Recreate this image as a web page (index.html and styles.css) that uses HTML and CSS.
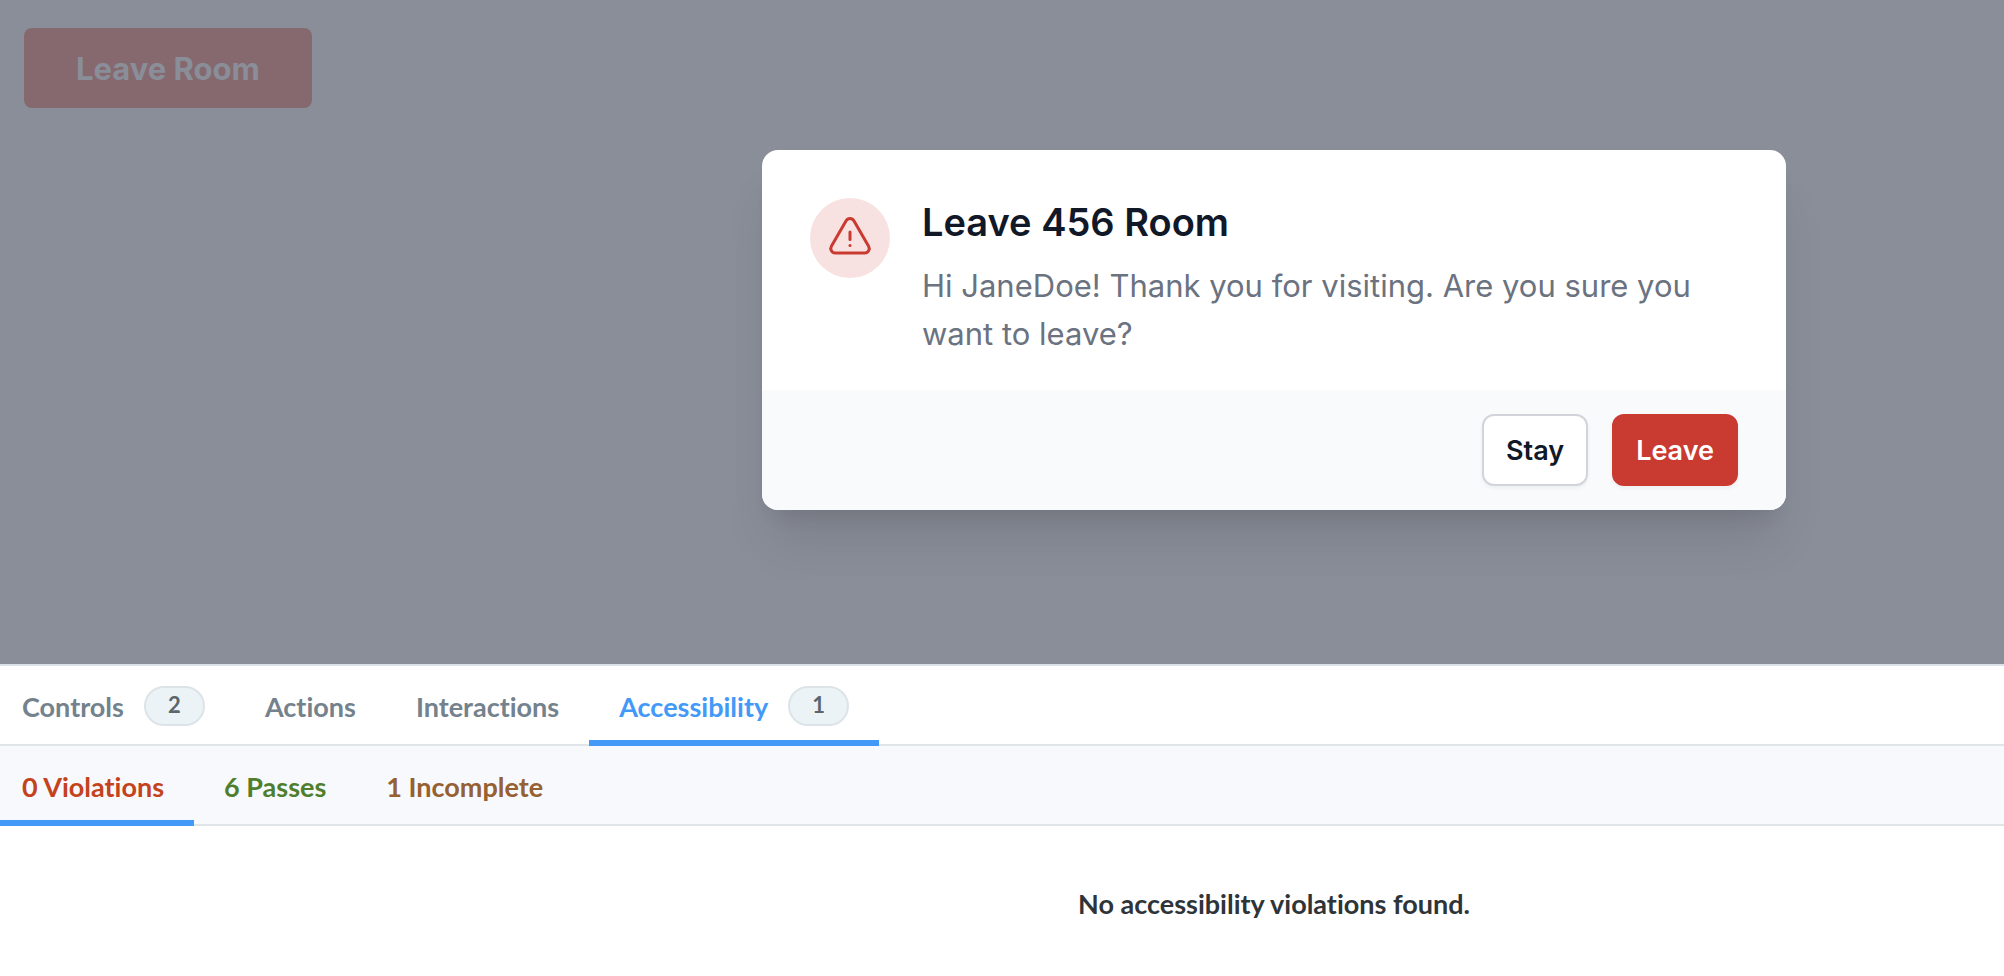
FILE: index.html
```html
<!DOCTYPE html>
<html lang="en">
<head>
<meta charset="utf-8">
<title>Leave Room</title>
<link rel="stylesheet" href="styles.css">
</head>
<body>
<main class="preview">
  <button class="trigger" type="button">Leave Room</button>
  <div class="stage">
    <section class="dialog" role="dialog" aria-labelledby="dialog-title" aria-describedby="dialog-text">
      <div class="dialog-body">
        <span class="dialog-icon">
          <svg viewBox="0 0 24 24" fill="none" stroke="currentColor" stroke-width="1.5" stroke-linecap="round" stroke-linejoin="round" aria-hidden="true">
            <path d="M12 9v3.75m-9.303 3.376c-.866 1.5.217 3.374 1.948 3.374h14.71c1.73 0 2.813-1.874 1.948-3.374L13.949 3.378c-.866-1.5-3.032-1.5-3.898 0L2.697 16.126z"/>
            <path d="M12 15.75h.007v.008H12z"/>
          </svg>
        </span>
        <div class="dialog-copy">
          <h1 class="dialog-title" id="dialog-title">Leave 456 Room</h1>
          <p class="dialog-text" id="dialog-text">Hi JaneDoe! Thank you for visiting. Are you sure you want to leave?</p>
        </div>
      </div>
      <div class="dialog-actions">
        <button class="button" type="button">Stay</button>
        <button class="button button-danger" type="button">Leave</button>
      </div>
    </section>
  </div>
</main>
<section class="addons">
  <div class="tabs" role="tablist">
    <button class="tab" type="button" role="tab">Controls<span class="badge">2</span></button>
    <button class="tab" type="button" role="tab">Actions</button>
    <button class="tab" type="button" role="tab">Interactions</button>
    <button class="tab active" type="button" role="tab" aria-selected="true">Accessibility<span class="badge">1</span></button>
  </div>
  <div class="tabs subtabs" role="tablist">
    <button class="tab violations active" type="button" role="tab" aria-selected="true">0 Violations</button>
    <button class="tab passes" type="button" role="tab">6 Passes</button>
    <button class="tab incomplete" type="button" role="tab">1 Incomplete</button>
  </div>
  <p class="message">No accessibility violations found.</p>
</section>
</body>
</html>
```
FILE: styles.css
```css
* { box-sizing: border-box; }
body {
  margin: 0;
  background: #fff;
  font-family: Inter, sans-serif;
  overflow-x: hidden;
}
button { font: inherit; border: 0; cursor: pointer; }
h1, p { margin: 0; }

.preview {
  background: #8a8e99;
  padding: 28px 24px 154px;
}
.trigger {
  display: block;
  height: 80px;
  padding: 0 52px;
  border-radius: 8px;
  background: #86696f;
  color: #8a8e99;
  font-size: 31px;
  font-weight: 700;
}
.stage {
  display: flex;
  justify-content: center;
  margin: 42px -24px 0;
  padding-left: 544px;
}
.dialog {
  width: 1024px;
  border-radius: 16px;
  background: #fff;
  overflow: hidden;
  box-shadow: 0 40px 50px -10px rgba(0, 0, 0, .1), 0 16px 20px -12px rgba(0, 0, 0, .1);
}
.dialog-body { display: flex; gap: 32px; padding: 48px 48px 32px; }
.dialog-icon {
  flex: none;
  display: flex;
  align-items: center;
  justify-content: center;
  width: 80px;
  height: 80px;
  border-radius: 50%;
  background: #f8e1e1;
  color: #c93a31;
}
.dialog-icon svg { width: 48px; height: 48px; }
.dialog-title {
  color: #111827;
  font-size: 38px;
  line-height: 48px;
  font-weight: 600;
}
.dialog-text {
  margin-top: 16px;
  color: #6b7280;
  font-size: 31px;
  line-height: 48px;
}
.dialog-actions {
  display: flex;
  justify-content: flex-end;
  gap: 24px;
  padding: 24px 48px;
  background: #f9fafb;
}
.button {
  height: 72px;
  padding: 0 22px;
  border: 2px solid #d1d5db;
  border-radius: 12px;
  background: #fff;
  color: #111827;
  font-size: 27px;
  font-weight: 600;
  box-shadow: 0 2px 4px rgba(0, 0, 0, .05);
}
.button-danger {
  border-color: #c93a31;
  background: #c93a31;
  color: #fff;
}

.addons {
  border-top: 2px solid #dbe1e8;
  color: #2e3438;
  font-family: Lato, sans-serif;
  font-size: 27px;
  font-weight: 700;
  font-variant-ligatures: none;
}
.tabs {
  display: flex;
  height: 80px;
  padding-right: 30px;
  box-shadow: inset 0 -2px #dfe5e9;
}
.subtabs { background: #f7f9fd; }
.tab {
  display: flex;
  align-items: center;
  gap: 20px;
  padding: 0 30px;
  background: none;
  color: #73828c;
  font-variant-ligatures: none;
}
.tab:first-child { padding-left: 22px; }
.tab.active { color: #4299f7; box-shadow: inset 0 -6px #4299f7; }
.badge {
  width: 61px;
  height: 40px;
  border: 2px solid #dde4e8;
  border-radius: 20px;
  background: #ebf3f7;
  color: #5c666d;
  font-size: 22px;
  line-height: 34px;
  text-align: center;
}
.subtabs .violations { color: #c4421c; }
.subtabs .passes { color: #4f7f2c; }
.subtabs .incomplete { color: #966030; }
.message {
  padding: 60px 0 54px 544px;
  line-height: 36px;
  text-align: center;
}
```
